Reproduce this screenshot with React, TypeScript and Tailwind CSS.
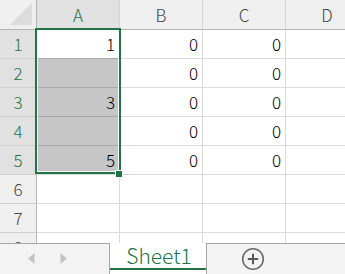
import React from 'react';

const GREEN = '#217346';

type Cell = { v?: string; sel?: boolean };

const cols = ['A', 'B', 'C', 'D'];

// 1..8行目（8行目はシートタブで隠れる）
const rows: Cell[][] = [
  [{ v: '1' }, { v: '0' }, { v: '0' }, {}],
  [{ sel: true }, { v: '0' }, { v: '0' }, {}],
  [{ v: '3', sel: true }, { v: '0' }, { v: '0' }, {}],
  [{ sel: true }, { v: '0' }, { v: '0' }, {}],
  [{ v: '5', sel: true }, { v: '0' }, { v: '0' }, {}],
  [{}, {}, {}, {}],
  [{}, {}, {}, {}],
  [{}, {}, {}, {}],
];

function PlusCircle() {
  return (
    <svg width="24" height="24" viewBox="0 0 24 24" fill="none">
      <circle cx="12" cy="12" r="10.3" stroke="#6b6b6b" strokeWidth="1.6" />
      <path d="M12 6.8v10.4M6.8 12h10.4" stroke="#5a5a5a" strokeWidth="2" />
    </svg>
  );
}

export default function App() {
  return (
    <div
      className="relative w-[345px] h-[274px] overflow-hidden bg-white flex flex-col font-light"
      style={{ fontFamily: '"Noto Sans CJK JP", "Liberation Sans", sans-serif' }}
    >
      {/* グリッド */}
      <div className="relative h-[243px] overflow-hidden">
        <div className="grid grid-cols-[37px_83px_83px_83px_83px]">
          {/* 左上の角 */}
          <div className="h-[30px] bg-[#efefef] border-r border-b border-[#b4b4b4] flex items-end justify-end pr-[3px] pb-[3px]">
            <svg width="23" height="23" viewBox="0 0 23 23">
              <polygon points="0,22 22,0 22,22" fill="#dcdcdc" />
            </svg>
          </div>
          {cols.map((c, i) => (
            <div
              key={c}
              className={`h-[30px] border-b border-b-[#b4b4b4] border-r border-r-[#d5d5d5] flex items-center justify-center text-[17px] ${
                i === 0 ? 'bg-[#e1e1e1] text-[#217346]' : 'bg-[#efefef] text-[#444444]'
              }`}
            >
              {c}
            </div>
          ))}

          {rows.map((row, r) => (
            <React.Fragment key={r}>
              <div
                className={`h-[29px] border-r border-r-[#b4b4b4] border-b border-b-[#d0d0d0] flex items-center justify-center text-[17px] ${
                  r < 5 ? 'bg-[#e1e1e1] text-[#217346]' : 'bg-[#efefef] text-[#444444]'
                }`}
              >
                {r + 1}
              </div>
              {row.map((cell, c) => (
                <div
                  key={c}
                  className={`h-[29px] border-r border-r-[#dadada] border-b flex items-center justify-end pr-[4px] text-[17px] text-black ${
                    cell.sel ? 'bg-[#c6c6c6]' : 'bg-white'
                  } ${c === 0 && r < 4 ? 'border-b-[#a9a9a9]' : 'border-b-[#dadada]'}`}
                >
                  {cell.v}
                </div>
              ))}
            </React.Fragment>
          ))}
        </div>

        {/* 選択範囲の枠 */}
        <div
          className="absolute left-[35px] top-[28px] w-[86px] h-[146px] border-2 pointer-events-none"
          style={{ borderColor: GREEN }}
        >
          <div className="w-full h-full border border-white" />
        </div>
        {/* フィルハンドル */}
        <div className="absolute left-[115px] top-[170px] w-[8px] h-[8px] border border-white bg-[#217346]" />
      </div>

      {/* シートタブ */}
      <div className="flex h-[31px]">
        <div className="w-[110px] bg-[#f3f3f3] border-t border-r border-[#a6a6a6] flex items-center pb-[1px]">
          <svg width="7" height="11" viewBox="0 0 7 11" className="ml-[28px]">
            <polygon points="6.5,0 0,5.5 6.5,11" fill="#c3c3c3" />
          </svg>
          <svg width="7" height="11" viewBox="0 0 7 11" className="ml-[25px]">
            <polygon points="0.5,0 7,5.5 0.5,11" fill="#c3c3c3" />
          </svg>
        </div>
        <div className="w-[96px] bg-white flex flex-col">
          <div className="h-[25px] flex items-center justify-center text-[21px] text-[#217346] leading-none pl-[2px]">
            Sheet1
          </div>
          <div className="h-[2px] bg-[#217346]" />
        </div>
        <div className="flex-1 bg-[#f3f3f3] border-t border-l border-[#a6a6a6] flex items-center pl-[34px]">
          <PlusCircle />
        </div>
      </div>
    </div>
  );
}
